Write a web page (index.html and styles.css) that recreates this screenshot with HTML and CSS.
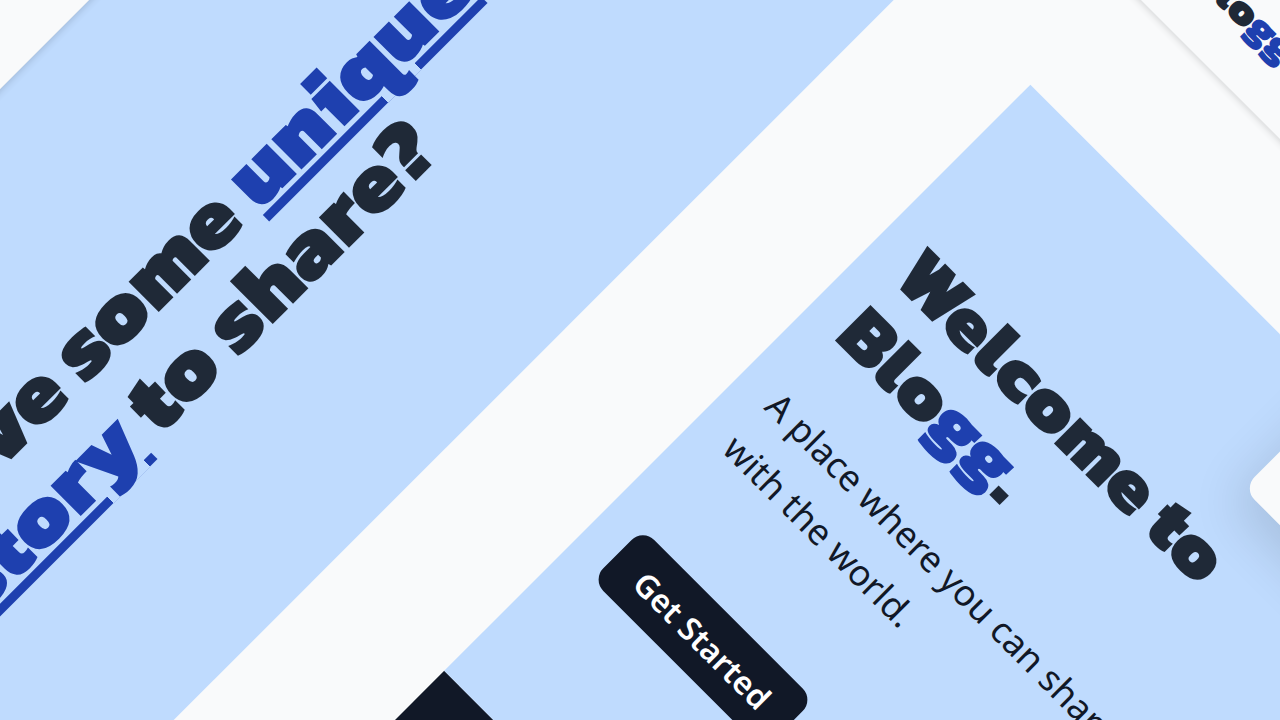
FILE: index.html
```html
<!DOCTYPE html>
<html lang="en">
<head>
<meta charset="utf-8">
<title>Blogg</title>
<link rel="stylesheet" href="styles.css">
</head>
<body>
<div class="stage">
  <div class="sheet sheet-story">
    <header class="nav"></header>
    <section class="story">
      <h2 class="story-title">Have some <span class="accent underlined">unique</span><br><span class="accent underlined">story</span> to share?</h2>
    </section>
  </div>
  <div class="sheet sheet-home">
    <header class="nav nav-home"><a class="logo" href="#">Blo<span class="accent">gg</span></a></header>
    <main class="home">
      <section class="hero">
        <h1 class="hero-title">Welcome to<br>Blo<span class="accent">gg</span>.</h1>
        <p class="hero-text">A place where you can share<br>with the world.</p>
        <button class="cta" type="button">Get Started</button>
        <div class="card"></div>
      </section>
    </main>
    <footer class="footer"></footer>
  </div>
</div>
</body>
</html>
```
FILE: styles.css
```css
* { box-sizing: border-box; }
body {
  margin: 0;
  background: #f9fafb;
  color: #111827;
  font-family: "Noto Sans", sans-serif;
}
.stage {
  position: relative;
  height: 100vh;
  overflow: hidden;
}
.sheet {
  position: absolute;
  transform-origin: 0 0;
}
.sheet-story {
  left: -679px;
  top: 628px;
  width: 1600px;
  transform: rotate(-45deg);
}
.sheet-home {
  left: 1222px;
  top: -107px;
  width: 1400px;
  transform: rotate(45deg);
}
.nav {
  position: relative;
  z-index: 1;
  display: flex;
  align-items: center;
  height: 99px;
  padding: 0 40px;
  background: #f9fafb;
  box-shadow: 0 4px 6px rgba(0, 0, 0, 0.07), 0 2px 4px rgba(0, 0, 0, 0.04);
}
.nav-home {
  height: 133px;
}
.logo, .hero-title, .story-title {
  font-family: Kanit, "Noto Sans", sans-serif;
  font-weight: 900;
  color: #1f2937;
}
.logo {
  font-size: 44px;
  text-decoration: none;
}
.accent { color: #1e40af; }
.underlined { text-decoration: underline; }
.story {
  display: flex;
  align-items: center;
  height: 569px;
  padding: 0 0 4px 476px;
  background: #bfdbfe;
}
.story-title {
  margin: 0;
  font-size: 90px;
  line-height: 89px;
}
.home { padding-top: 138px; }
.hero {
  position: relative;
  height: 829px;
  padding: 169px 40px 40px;
  background: #bfdbfe;
}
.hero-title {
  margin: 0 0 42px;
  font-size: 78px;
  line-height: 82px;
}
.hero-text {
  margin: 0 0 93px;
  font-size: 36px;
  line-height: 60px;
}
.cta {
  height: 72px;
  padding: 0 32px;
  border: 0;
  border-radius: 16px;
  background: #111827;
  color: #fff;
  font: 600 32px "Noto Sans", sans-serif;
}
.card {
  position: absolute;
  left: 436px;
  top: -200px;
  width: 500px;
  height: 335px;
  border-radius: 16px;
  background: #f9fafb;
  box-shadow: 0 20px 50px rgba(0, 0, 0, 0.12);
}
.footer {
  height: 300px;
  background: #111827;
}
```
